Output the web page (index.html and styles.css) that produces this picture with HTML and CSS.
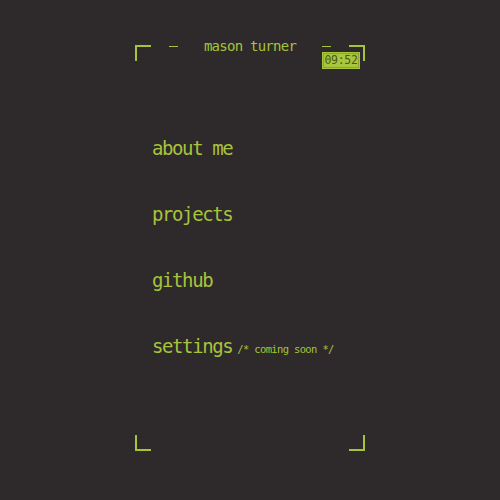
FILE: index.html
```html
<!DOCTYPE html>
<html>
<head>
<meta charset="utf-8">
<link rel="stylesheet" href="styles.css">
</head>
<body>
<div class="frame">
  <span class="corner tl"></span>
  <span class="corner tr"></span>
  <span class="corner bl"></span>
  <span class="corner br"></span>
  <header class="head">
    <span class="dash"></span>
    <span class="name">mason turner</span>
    <span class="dash"></span>
  </header>
  <div class="clock">09:52</div>
  <nav class="menu">
    <a class="item">about me</a>
    <a class="item">projects</a>
    <a class="item">github</a>
    <a class="item">settings<span class="note">/* coming soon */</span></a>
  </nav>
</div>
</body>
</html>
```

FILE: styles.css
```css
html, body {
  margin: 0;
  padding: 0;
  background: #2e2a2b;
  width: 500px;
  height: 500px;
  overflow: hidden;
}
body {
  font-family: "DejaVu Sans Mono", "Liberation Mono", monospace;
  color: #a5c43a;
}
.frame {
  position: relative;
  width: 230px;
  height: 406px;
  margin: 45px 0 0 135px;
  display: flex;
  flex-direction: column;
}
.corner {
  position: absolute;
  width: 14px;
  height: 14px;
  border-color: #a5c43a;
  border-style: solid;
  border-width: 0;
}
.corner.tl { left: 0; top: 0; border-left-width: 2px; border-top-width: 2px; }
.corner.tr { right: 0; top: 0; border-right-width: 2px; border-top-width: 2px; }
.corner.bl { left: 0; bottom: 0; border-left-width: 2px; border-bottom-width: 2px; }
.corner.br { right: 0; bottom: 0; border-right-width: 2px; border-bottom-width: 2px; }
.head {
  display: flex;
  align-items: center;
  justify-content: center;
  gap: 26px;
  height: 2px;
}
.dash {
  width: 9px;
  height: 1px;
  background: #a5c43a;
  margin-top: 1px;
}
.name {
  font-size: 14px;
  letter-spacing: -0.75px;
  line-height: 16px;
}
.clock {
  position: absolute;
  left: 187px;
  top: 7px;
  width: 38px;
  height: 17px;
  box-sizing: border-box;
  background: #a8c73c;
  box-shadow: inset 0 0 0 1px #a8c73c, inset 0 0 0 2px #8ea534;
  color: #4a5820;
  font-size: 11.5px;
  letter-spacing: -0.3px;
  line-height: 17px;
  text-align: center;
}
.menu {
  display: flex;
  flex-direction: column;
  gap: 42px;
  padding-left: 17px;
  margin-top: 89px;
}
.item {
  font-size: 19px;
  letter-spacing: -1.4px;
  line-height: 24px;
  white-space: nowrap;
}
.note {
  font-size: 10.5px;
  letter-spacing: -0.65px;
  margin-left: 5px;
}
```
